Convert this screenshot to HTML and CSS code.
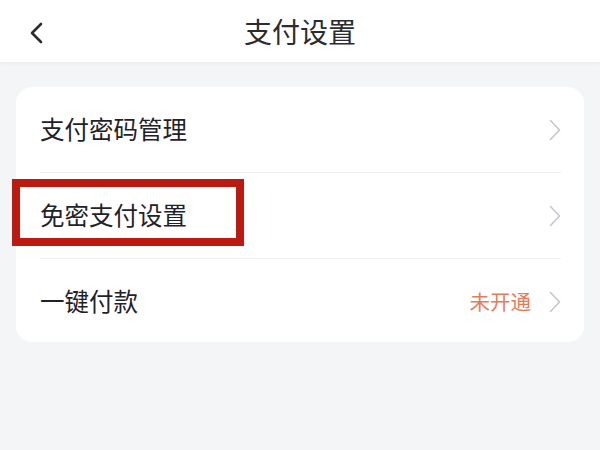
FILE: index.html
```html
<!DOCTYPE html>
<html lang="zh">
<head>
<meta charset="utf-8">
<link rel="stylesheet" href="styles.css">
</head>
<body>
<header class="bar">
  <svg class="back" width="16" height="24" viewBox="0 0 16 24"><path d="M13 3 L4 12 L13 21" fill="none" stroke="#2a2c30" stroke-width="2.6" stroke-linecap="round" stroke-linejoin="round"/></svg>
  <h1 class="title">支付设置</h1>
</header>
<main class="card">
  <div class="row">
    <span class="label">支付密码管理</span>
    <span class="right"><svg class="chev" width="12" height="22" viewBox="0 0 12 22"><path d="M1.5 1.5 L10.5 11 L1.5 20.5" fill="none" stroke="#c4c7cf" stroke-width="1.6" stroke-linecap="round" stroke-linejoin="round"/></svg></span>
  </div>
  <div class="row">
    <span class="label">免密支付设置</span>
    <span class="right"><svg class="chev" width="12" height="22" viewBox="0 0 12 22"><path d="M1.5 1.5 L10.5 11 L1.5 20.5" fill="none" stroke="#c4c7cf" stroke-width="1.6" stroke-linecap="round" stroke-linejoin="round"/></svg></span>
    <div class="highlight"></div>
  </div>
  <div class="row">
    <span class="label">一键付款</span>
    <span class="right"><span class="status">未开通</span><svg class="chev" width="12" height="22" viewBox="0 0 12 22"><path d="M1.5 1.5 L10.5 11 L1.5 20.5" fill="none" stroke="#c4c7cf" stroke-width="1.6" stroke-linecap="round" stroke-linejoin="round"/></svg></span>
  </div>
</main>
</body>
</html>
```
FILE: styles.css
```css
html, body {
  margin: 0;
  padding: 0;
}
body {
  width: 600px;
  height: 450px;
  background: #f4f5f7;
  font-family: "Noto Sans CJK SC", "Noto Sans", sans-serif;
  color: #1f2229;
  overflow: hidden;
}
.bar {
  position: relative;
  height: 62px;
  background: #ffffff;
  display: flex;
  align-items: center;
  justify-content: center;
  box-shadow: 0 1px 4px rgba(0, 0, 0, 0.05);
}
.back {
  position: absolute;
  left: 28px;
  top: 21px;
}
.title {
  margin: 0;
  font-size: 28px;
  font-weight: 400;
  color: #2a2c30;
  line-height: 1;
  padding-bottom: 1px;
}
.card {
  margin: 25px 16px 0;
  background: #ffffff;
  border-radius: 16px;
  padding: 0 23px 0 24px;
  height: 255px;
}
.row {
  position: relative;
  height: 85px;
  display: flex;
  align-items: center;
  justify-content: space-between;
  border-bottom: 1px solid #eff0f2;
}
.row:last-child {
  border-bottom: none;
}
.label {
  font-size: 24.5px;
  line-height: 1;
}
.right {
  display: flex;
  align-items: center;
  gap: 18px;
}
.status {
  font-size: 20.5px;
  color: #e27d5a;
  line-height: 1;
}
.chev {
  display: block;
}
.highlight {
  position: absolute;
  left: -28px;
  top: 6px;
  width: 216px;
  height: 51px;
  border: 8px solid #bb1a10;
}
```
